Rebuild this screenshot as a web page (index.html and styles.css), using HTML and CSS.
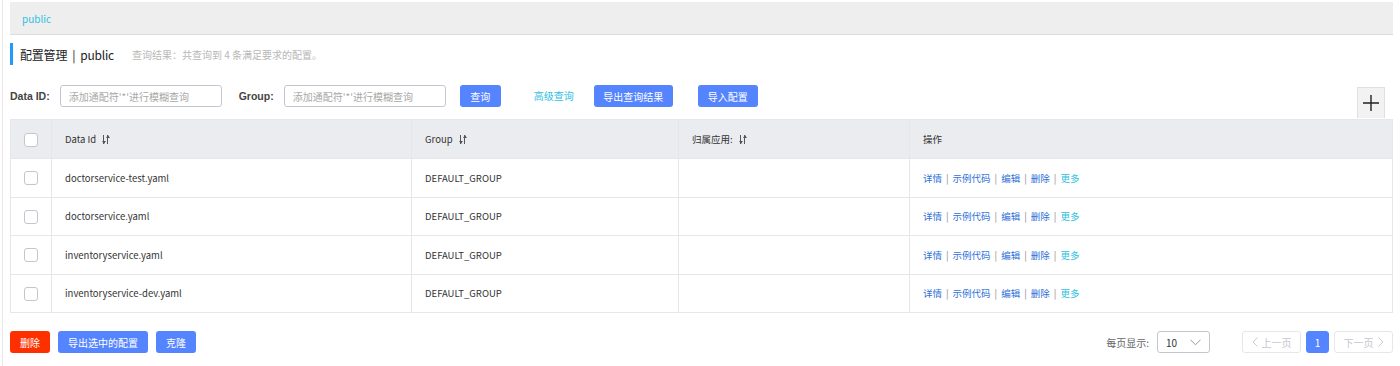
FILE: index.html
```html
<!DOCTYPE html>
<html>
  <head>
    <title>配置管理</title>
    <link rel="stylesheet" href="styles.css">
  </head>
  <body>
    <div class="page">
      <div class="ns-bar"><span class="ns-item">public</span></div>

      <div class="page-title">
        <span class="title-main">配置管理&nbsp;&nbsp;|&nbsp;&nbsp;public</span>
        <span class="title-desc">查询结果：共查询到 4 条满足要求的配置。</span>
      </div>

      <div class="search-row">
        <label class="field-label">Data ID:</label>
        <input class="field-input" type="text" placeholder="添加通配符'*'进行模糊查询">
        <label class="field-label group-label">Group:</label>
        <input class="field-input" type="text" placeholder="添加通配符'*'进行模糊查询">
        <button class="btn btn-primary btn-search">查询</button>
        <a class="link-advanced">高级查询</a>
        <button class="btn btn-primary btn-export">导出查询结果</button>
        <button class="btn btn-primary btn-import">导入配置</button>
        <button class="btn-add" title="新建配置">
          <svg width="16" height="16" viewBox="0 0 16 16"><path d="M8 0v16M0 8h16" stroke="#222" stroke-width="1.4"/></svg>
        </button>
      </div>

      <table class="config-table">
        <thead>
          <tr>
            <th class="col-check"><span class="checkbox"></span></th>
            <th class="col-id">Data Id <span class="sort"></span></th>
            <th class="col-group">Group <span class="sort"></span></th>
            <th class="col-app">归属应用: <span class="sort"></span></th>
            <th class="col-ops">操作</th>
          </tr>
        </thead>
        <tbody id="rows"></tbody>
      </table>

      <div class="footer-row">
        <div class="footer-left">
          <button class="btn btn-danger">删除</button>
          <button class="btn btn-primary btn-wide">导出选中的配置</button>
          <button class="btn btn-primary">克隆</button>
        </div>
        <div class="footer-right">
          <span class="page-size-label">每页显示:</span>
          <div class="page-size">
            <span>10</span>
            <svg width="11" height="7" viewBox="0 0 11 7"><path d="M0.5 0.8l5 5 5-5" fill="none" stroke="#999" stroke-width="1"/></svg>
          </div>
          <div class="pager">
            <button class="pager-btn disabled">
              <svg width="6" height="10" viewBox="0 0 6 10"><path d="M5.5 0.5L1 5l4.5 4.5" fill="none" stroke="#ccc"/></svg>
              上一页
            </button>
            <button class="pager-btn current">1</button>
            <button class="pager-btn disabled">
              下一页
              <svg width="6" height="10" viewBox="0 0 6 10"><path d="M0.5 0.5L5 5 0.5 9.5" fill="none" stroke="#ccc"/></svg>
            </button>
          </div>
        </div>
      </div>
    </div>

    <script>
      const configs = [
        { dataId: "doctorservice-test.yaml", group: "DEFAULT_GROUP", app: "" },
        { dataId: "doctorservice.yaml", group: "DEFAULT_GROUP", app: "" },
        { dataId: "inventoryservice.yaml", group: "DEFAULT_GROUP", app: "" },
        { dataId: "inventoryservice-dev.yaml", group: "DEFAULT_GROUP", app: "" },
      ];

      const tbody = document.getElementById("rows");
      configs.forEach((c) => {
        const tr = document.createElement("tr");
        tr.innerHTML = `
          <td class="col-check"><span class="checkbox"></span></td>
          <td>${c.dataId}</td>
          <td>${c.group}</td>
          <td>${c.app}</td>
          <td class="ops">
            <a>详情</a><span class="sep">|</span><a>示例代码</a><span class="sep">|</span><a>编辑</a><span class="sep">|</span><a>删除</a><span class="sep">|</span><a class="more">更多</a>
          </td>
        `;
        tbody.appendChild(tr);
      });
    </script>
  </body>
</html>
```

FILE: styles.css
```css
body {
  margin: 0;
  font-family: "Noto Sans CJK SC", "Noto Sans", sans-serif;
  font-size: 10px;
  color: #333;
  background: #fff;
}

.page {
  margin-left: 2px;
  border-left: 1px solid #e8e8e8;
  padding: 2px 7px 0 7px;
  height: 364px;
}

.ns-bar {
  height: 32px;
  background: #eeeeee;
  border-bottom: 1px solid #dcdcdc;
  display: flex;
  align-items: center;
  padding-left: 12px;
}

.ns-item {
  color: #2fbfdf;
  font-size: 10px;
}

.page-title {
  margin-top: 8px;
  height: 22px;
  border-left: 3px solid #209bfa;
  padding-left: 7px;
  display: flex;
  align-items: center;
}

.title-main {
  font-size: 12px;
  color: #222;
  letter-spacing: -0.2px;
}

.title-desc {
  margin-left: 18px;
  font-size: 10px;
  color: #b8b8b8;
}

.search-row {
  margin-top: 20px;
  display: flex;
  align-items: flex-start;
}

.field-label {
  font-family: "Liberation Sans", Arial, sans-serif;
  font-weight: bold;
  font-size: 10.5px;
  color: #444;
  line-height: 22px;
}

.group-label {
  margin-left: 17px;
}

.field-input {
  width: 162px;
  height: 22px;
  box-sizing: border-box;
  margin-left: 10px;
  border: 1px solid #c4c6cf;
  border-radius: 3px;
  padding: 0 8px;
  font-family: inherit;
  font-size: 10px;
  outline: none;
}

.field-input::placeholder {
  color: #a8a8a8;
}

.btn {
  height: 22px;
  border: none;
  border-radius: 3px;
  padding: 0 12px;
  font-family: inherit;
  font-size: 10px;
  color: #fff;
  cursor: pointer;
}

.btn-primary {
  background: #5584ff;
}

.btn-danger {
  background: #ff3000;
}

.btn-search {
  margin-left: 14px;
  width: 41px;
  padding: 0;
}

.link-advanced {
  margin-left: 33px;
  line-height: 22px;
  color: #2fbfdf;
  cursor: pointer;
}

.btn-export {
  margin-left: 20px;
  width: 79px;
  padding: 0;
}

.btn-import {
  margin-left: 25px;
  width: 60px;
  padding: 0;
}

.btn-add {
  margin-left: auto;
  margin-right: 8px;
  margin-top: 2px;
  width: 28px;
  height: 31px;
  background: #f2f2f2;
  border: 1px solid #e0e0e0;
  border-bottom: none;
  display: flex;
  align-items: center;
  justify-content: center;
  padding: 0;
  cursor: pointer;
}

.config-table {
  width: 100%;
  border-collapse: collapse;
  table-layout: fixed;
  margin-top: 1px;
}

.config-table th,
.config-table td {
  border: 1px solid #e6e7eb;
  height: 37.5px;
  padding: 0 0 0 13px;
  text-align: left;
  font-weight: normal;
  font-size: 9.5px;
  color: #333;
}

.config-table th {
  background: #ebecf0;
  height: 38px;
}

.config-table .col-check {
  width: 40px;
  padding: 0;
  text-align: center;
}

.col-id {
  width: 346px;
}

.col-group {
  width: 253px;
}

.col-app {
  width: 217px;
}

.checkbox {
  display: inline-block;
  width: 12px;
  height: 12px;
  border: 1px solid #c4c6cf;
  border-radius: 3px;
  background: #fff;
  vertical-align: middle;
}

.sort {
  display: inline-block;
  width: 7px;
  height: 9px;
  margin-left: 4px;
  vertical-align: -1px;
  background:
    linear-gradient(#555, #555) 1px 0 / 1px 9px no-repeat,
    linear-gradient(#555, #555) 5px 0 / 1px 9px no-repeat;
  position: relative;
}

.sort::before,
.sort::after {
  content: "";
  position: absolute;
  width: 0;
  height: 0;
  border-left: 2px solid transparent;
  border-right: 2px solid transparent;
}

.sort::before {
  left: 0;
  bottom: 0;
  border-top: 3px solid #555;
}

.sort::after {
  left: 4px;
  top: 0;
  border-bottom: 3px solid #555;
}

.ops a {
  color: #2e6fd8;
  cursor: pointer;
}

.ops a.more {
  color: #2fbfdf;
}

.ops .sep {
  color: #888;
  margin: 0 4px;
}

.footer-row {
  margin-top: 18px;
  display: flex;
  justify-content: space-between;
  align-items: center;
}

.footer-left {
  display: flex;
  gap: 8px;
}

.footer-left .btn {
  width: 40px;
  padding: 0;
}

.footer-left .btn-wide {
  width: 90px;
}

.footer-right {
  display: flex;
  align-items: center;
}

.page-size-label {
  color: #666;
  margin-right: 8px;
}

.page-size {
  width: 53px;
  height: 22px;
  box-sizing: border-box;
  border: 1px solid #c4c6cf;
  border-radius: 3px;
  display: flex;
  align-items: center;
  justify-content: space-between;
  padding: 0 8px;
  color: #333;
}

.pager {
  display: flex;
  gap: 5px;
  margin-left: 32px;
}

.pager-btn {
  height: 22px;
  width: 59px;
  border: 1px solid #e6e7eb;
  border-radius: 3px;
  background: #fff;
  font-family: inherit;
  font-size: 10px;
  color: #c4c6cf;
  display: flex;
  align-items: center;
  justify-content: center;
  gap: 4px;
  padding: 0;
}

.pager-btn.current {
  width: 23px;
  background: #5584ff;
  border-color: #5584ff;
  color: #fff;
}
```
